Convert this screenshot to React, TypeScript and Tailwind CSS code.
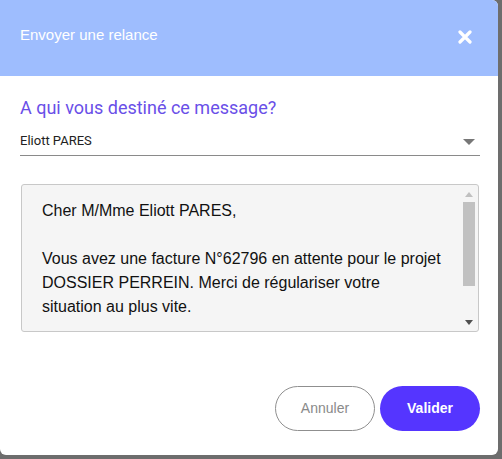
import React from 'react';

export default function App() {
    return (
        <div className="w-[502px] h-[459px] bg-[#6d6d6d] overflow-hidden">
            <div className="w-[498px] h-[455px] bg-white rounded-r-[6px] rounded-bl-[6px] flex flex-col overflow-hidden">
                <header className="h-[76px] bg-[#9ebdfe] flex items-center justify-between pl-[20px] pr-[26px] shrink-0">
                    <h1 className="text-white text-[15px] font-['Liberation_Sans',sans-serif] -mt-[5px]">Envoyer une relance</h1>
                    <svg width="14" height="14" viewBox="0 0 14 14" className="-mt-[3px]">
                        <path d="M2 2 L12 12 M12 2 L2 12" stroke="white" strokeWidth="3.2" strokeLinecap="round" />
                    </svg>
                </header>
                <div className="pl-[20px] pr-[18px] pt-[20px] font-['Roboto',sans-serif]">
                    <p className="text-[#6a4fe8] text-[18px] leading-[24px]">A qui vous destiné ce message?</p>
                    <div className="mt-[8px] h-[28px] border-b border-[#8a8a8a] flex items-center justify-between text-[13px] text-[#222]">
                        <span className="-mt-[1px]">Eliott PARES</span>
                        <svg width="12" height="6" viewBox="0 0 12 6" className="mr-[5px]">
                            <path d="M0 0 L12 0 L6 6 Z" fill="#777" />
                        </svg>
                    </div>
                </div>
                <div className="ml-[21px] mr-[19px] mt-[28px] h-[148px] bg-[#f5f5f5] border border-[#c8c8c8] rounded-[3px] flex font-['Liberation_Sans',sans-serif] text-[16px] leading-[24px] text-[#111]">
                    <div className="flex-1 pl-[20px] pt-[14px]">
                        <p>Cher M/Mme Eliott PARES,</p>
                        <p className="mt-[24px]">
                            Vous avez une facture N°62796 en attente pour le projet
                            <br />
                            DOSSIER PERREIN. Merci de régulariser votre
                            <br />
                            situation au plus vite.
                        </p>
                    </div>
                    <div className="w-[15px] mr-[2px] flex flex-col items-center">
                        <svg width="8" height="5" viewBox="0 0 8 5" className="mt-[7px]">
                            <path d="M0 5 L8 5 L4 0 Z" fill="#c0c0c0" />
                        </svg>
                        <div className="w-[12px] h-[84px] mt-[5px] bg-[#c1c1c1]" />
                        <div className="flex-1" />
                        <svg width="8" height="5" viewBox="0 0 8 5" className="mb-[6px]">
                            <path d="M0 0 L8 0 L4 5 Z" fill="#505050" />
                        </svg>
                    </div>
                </div>
                <div className="flex-1" />
                <div className="flex justify-end gap-[5px] pr-[18px] pb-[24px] font-['Liberation_Sans',sans-serif] text-[14px]">
                    <button className="w-[100px] h-[45px] rounded-full border border-[#8f8f8f] text-[#8a8a8a]">Annuler</button>
                    <button className="w-[100px] h-[45px] rounded-full bg-[#5535ff] text-white font-bold">Valider</button>
                </div>
            </div>
        </div>
    );
}
